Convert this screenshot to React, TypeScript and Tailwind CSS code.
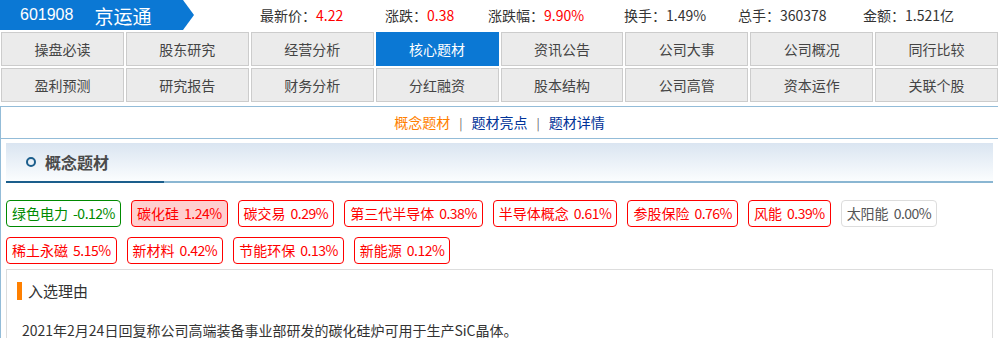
const stats = [
  { label: "最新价", value: "4.22", red: true, w: "w-[125px]" },
  { label: "涨跌", value: "0.38", red: true, w: "w-[103px]" },
  { label: "涨跌幅", value: "9.90%", red: true, w: "w-[136px]" },
  { label: "换手", value: "1.49%", red: false, w: "w-[114px]" },
  { label: "总手", value: "360378", red: false, w: "w-[125px]" },
  { label: "金额", value: "1.521亿", red: false, w: "w-[120px]" },
];

const navs = [
  "操盘必读", "股东研究", "经营分析", "核心题材", "资讯公告", "公司大事", "公司概况", "同行比较",
  "盈利预测", "研究报告", "财务分析", "分红融资", "股本结构", "公司高管", "资本运作", "关联个股",
];

type Tag = { name: string; pct: string; kind: "up" | "upHot" | "down" | "flat" };

const tags: Tag[] = [
  { name: "绿色电力", pct: "-0.12%", kind: "down" },
  { name: "碳化硅", pct: "1.24%", kind: "upHot" },
  { name: "碳交易", pct: "0.29%", kind: "up" },
  { name: "第三代半导体", pct: "0.38%", kind: "up" },
  { name: "半导体概念", pct: "0.61%", kind: "up" },
  { name: "参股保险", pct: "0.76%", kind: "up" },
  { name: "风能", pct: "0.39%", kind: "up" },
  { name: "太阳能", pct: "0.00%", kind: "flat" },
  { name: "稀土永磁", pct: "5.15%", kind: "up" },
  { name: "新材料", pct: "0.42%", kind: "up" },
  { name: "节能环保", pct: "0.13%", kind: "up" },
  { name: "新能源", pct: "0.12%", kind: "up" },
];

const tagStyle = {
  up: "border-[#ff0000] text-[#ff0000] bg-white",
  upHot: "border-[#ff0000] text-[#ff0000] bg-[#ffcfcf]",
  down: "border-[#008a00] text-[#008a00] bg-white",
  flat: "border-[#dddddd] text-[#555555] bg-white",
};

export default function App() {
  return (
    <div className="w-[998px] bg-white font-['Noto_Sans_CJK_SC',sans-serif] text-[14px] text-[#333]">
      {/* stock header */}
      <div className="flex h-[30px] items-center">
        <div className="flex h-[30px] w-[194px] items-center bg-[#0b78d4] text-white [clip-path:polygon(0_0,calc(100%-11px)_0,100%_50%,calc(100%-11px)_100%,0_100%)]">
          <span className="ml-[20px] font-['Liberation_Sans',sans-serif] text-[16px]">601908</span>
          <span className="ml-[21px] text-[19px] leading-none">京运通</span>
        </div>
        <div className="ml-[66px] flex">
          {stats.map((s) => (
            <div key={s.label} className={`${s.w} whitespace-nowrap`}>
              {s.label}：<span className={s.red ? "text-[#ff0000]" : ""}>{s.value}</span>
            </div>
          ))}
        </div>
      </div>

      {/* nav grid */}
      <div className="mt-[2px] grid grid-cols-8 gap-[2px] pl-[1px]">
        {navs.map((n) => (
          <div
            key={n}
            className={
              n === "核心题材"
                ? "flex h-[34px] items-center justify-center border border-[#0b78d4] bg-[#0b78d4] text-white"
                : "flex h-[34px] items-center justify-center border border-[#cccccc] bg-[#ebebeb] text-[#444]"
            }
          >
            {n}
          </div>
        ))}
      </div>

      {/* panel */}
      <div className="mt-[4px] border-l border-t border-[#93bcd8]">
        <div className="flex h-[32px] items-center justify-center border-b border-[#93bcd8]">
          <span className="text-[#ff7f00]">概念题材</span>
          <span className="mx-[9px] text-[12px] text-[#666]">|</span>
          <span className="text-[#003399]">题材亮点</span>
          <span className="mx-[9px] text-[12px] text-[#666]">|</span>
          <span className="text-[#003399]">题材详情</span>
        </div>

        <div className="px-[5px] pt-[4px]">
          <div>
            <div className="flex h-[38px] items-center bg-gradient-to-b from-[#dae5f1] to-[#fbfdfe]">
              <span className="ml-[20px] h-[10px] w-[10px] rounded-full border-[2.5px] border-[#1b5e8c]"></span>
              <span className="ml-[9px] text-[16px] font-bold text-[#4a4a4a]">概念题材</span>
            </div>
            <div className="flex h-[2px]">
              <div className="w-[158px] bg-[#1b5e8c]"></div>
              <div className="flex-1 bg-[#8ab6d2]"></div>
            </div>
          </div>

          <div className="flex flex-wrap gap-[10px] pt-[17px]">
            {tags.map((t) => (
              <div
                key={t.name}
                className={`flex h-[27px] items-center whitespace-nowrap rounded-[4px] border px-[5px] ${tagStyle[t.kind]}`}
              >
                <span>{t.name}</span>
                <span className="ml-[5px] tracking-[-0.5px]">{t.pct}</span>
              </div>
            ))}
          </div>

          <div className="mt-[5px] h-[80px] border border-[#dddddd]">
            <div className="flex items-center pl-[10px] pt-[10px]">
              <span className="h-[18px] w-[5px] bg-[#ff8000]"></span>
              <span className="ml-[6px] text-[15px] text-[#333]">入选理由</span>
            </div>
            <div className="mt-[17px] pl-[15px] text-[14px] text-[#333]">
              2021年2月24日回复称公司高端装备事业部研发的碳化硅炉可用于生产SiC晶体。
            </div>
          </div>
        </div>
      </div>
    </div>
  );
}
